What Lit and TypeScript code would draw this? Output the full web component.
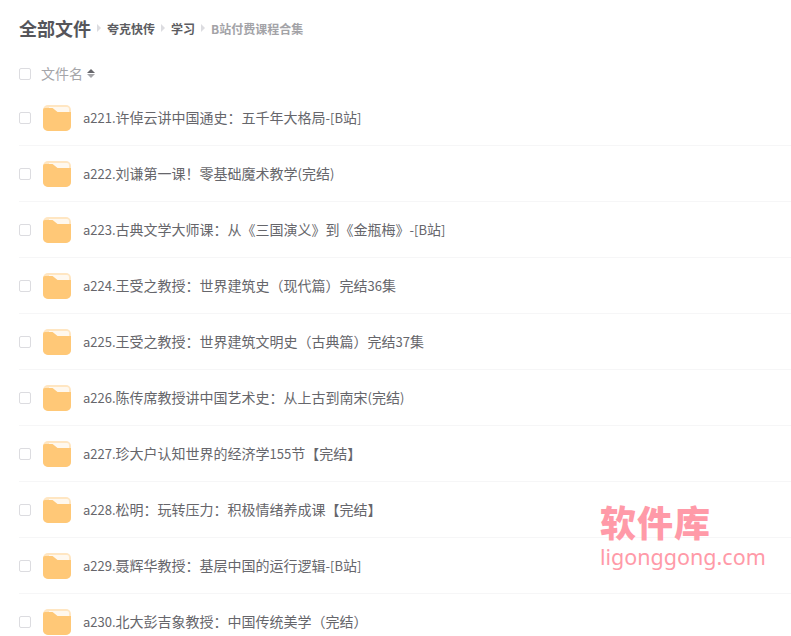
import { LitElement, html, css } from "lit";
import { customElement } from "lit/decorators.js";

const rows = [
  "a221.许倬云讲中国通史：五千年大格局-[B站]",
  "a222.刘谦第一课！零基础魔术教学(完结)",
  "a223.古典文学大师课：从《三国演义》到《金瓶梅》-[B站]",
  "a224.王受之教授：世界建筑史（现代篇）完结36集",
  "a225.王受之教授：世界建筑文明史（古典篇）完结37集",
  "a226.陈传席教授讲中国艺术史：从上古到南宋(完结)",
  "a227.珍大户认知世界的经济学155节【完结】",
  "a228.松明：玩转压力：积极情绪养成课【完结】",
  "a229.聂辉华教授：基层中国的运行逻辑-[B站]",
  "a230.北大彭吉象教授：中国传统美学（完结）",
];

@customElement("app-root")
export class AppRoot extends LitElement {
  static styles = css`
    :host {
      display: block;
      position: relative;
      width: 791px;
      height: 636px;
      overflow: hidden;
      background: #fff;
      font-family: "Noto Sans CJK SC", "Noto Sans", sans-serif;
    }
    .crumbs {
      display: flex;
      align-items: center;
      height: 20px;
      padding: 18px 0 0 19px;
      font-size: 12px;
      font-weight: 700;
      color: #5c5c61;
    }
    .title {
      font-size: 18px;
      font-weight: 700;
      color: #55555a;
    }
    .sep {
      width: 0;
      height: 0;
      margin: 0 6px;
      border-left: 4px solid #dcdce0;
      border-top: 4px solid transparent;
      border-bottom: 4px solid transparent;
    }
    .muted { color: #a3a3a7; }
    .head {
      display: flex;
      align-items: center;
      height: 20px;
      margin-top: 25px;
      padding-left: 19px;
      color: #a5a5a9;
      font-size: 14px;
    }
    .check {
      box-sizing: border-box;
      width: 12px;
      height: 12px;
      flex: none;
      margin-top: 1px;
      border: 1px solid #dcdce0;
      border-radius: 2px;
      background: #fff;
    }
    .head .check { margin-right: 10px; }
    .sort {
      display: flex;
      flex-direction: column;
      gap: 1px;
      margin-left: 4px;
    }
    .sort i {
      width: 0;
      height: 0;
      border-left: 4px solid transparent;
      border-right: 4px solid transparent;
    }
    .sort i.up { border-bottom: 4px solid #66666b; }
    .sort i.down { border-top: 4px solid #a5a5a9; }
    .list {
      margin: 7px 0 0 19px;
    }
    .row {
      display: flex;
      align-items: center;
      box-sizing: border-box;
      height: 56px;
      border-bottom: 1px solid #f6f6f7;
      font-size: 14px;
      color: #66666b;
    }
    .row .check { margin-right: 12px; }
    .row svg {
      flex: none;
      width: 28px;
      height: 26px;
      margin: 1px 12px 0 0;
    }
    .name { margin-bottom: 2px; }
    .lat { font-size: 13px; }
    .mark {
      position: absolute;
      left: 600px;
      top: 500px;
      width: 170px;
      color: #ff9aa8;
    }
    .mark .big {
      font-size: 36px;
      font-weight: 900;
      line-height: 42px;
      letter-spacing: 1px;
    }
    .mark .small {
      margin-top: 4px;
      font-family: "Noto Sans", sans-serif;
      font-size: 21.5px;
      line-height: 22px;
      white-space: nowrap;
    }
  `;

  folder() {
    return html`<svg viewBox="0 0 28 26">
      <rect x="0" y="0" width="28" height="26" rx="5" fill="#ffe6c2"></rect>
      <path d="M6 2h18a2 2 0 0 1 2 2v3H14L10 3.5H6z" fill="#fff8ee"></path>
      <path d="M0 5a2 2 0 0 1 2-2h7.5l5 4H28v14a5 5 0 0 1-5 5H5a5 5 0 0 1-5-5z" fill="#ffc877"></path>
    </svg>`;
  }

  label(text: string) {
    return text
      .split(/([\x20-\x7e]+)/)
      .map((part, i) => (i % 2 ? html`<span class="lat">${part}</span>` : part));
  }

  render() {
    return html`
      <div class="crumbs">
        <span class="title">全部文件</span><span class="sep"></span>
        <span>夸克快传</span><span class="sep"></span>
        <span>学习</span><span class="sep"></span>
        <span class="muted">B站付费课程合集</span>
      </div>
      <div class="head">
        <span class="check"></span><span>文件名</span>
        <span class="sort"><i class="up"></i><i class="down"></i></span>
      </div>
      <div class="list">
        ${rows.map(
          (r) => html`<div class="row"><span class="check"></span>${this.folder()}<span class="name">${this.label(r)}</span></div>`
        )}
      </div>
      <div class="mark">
        <div class="big">软件库</div>
        <div class="small">ligonggong.com</div>
      </div>
    `;
  }
}
